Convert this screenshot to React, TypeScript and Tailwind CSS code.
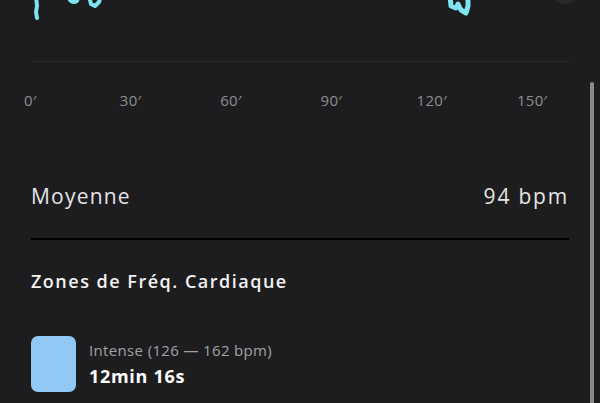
const ticks = ["0′", "30′", "60′", "90′", "120′", "150′"];

const HeartChart = () => (
  <div className="relative h-[62px] w-full">
    <svg className="absolute inset-0" width="600" height="62" viewBox="0 0 600 62">
      <g fill="none" stroke="#7ee4f2" strokeLinecap="round" strokeLinejoin="round">
        <path d="M36 -4 L37 6 L36 12 L37 18" strokeWidth="4" />
        <path d="M68 -4 Q70 2 74 2 Q78 2 78 -4" strokeWidth="4" />
        <path d="M89 -4 L91 4 L95 6 L99 2 L101 -4" strokeWidth="4" />
        <path d="M450 -4 L451 6 L456 8 L458 4 L461 10 L466 13 L468 6 L468 -4" strokeWidth="5" />
      </g>
    </svg>
    <div className="absolute right-[22px] top-[-22px] h-[26px] w-[26px] rounded-full bg-[#2a2a2c]" />
    <div className="absolute bottom-0 left-[32px] right-[30px] h-px bg-[#2b2b2d]" />
  </div>
);

export default function App() {
  return (
    <div
      className="relative h-[403px] w-[600px] overflow-hidden bg-[#1d1d1f] text-[#e4e4e4]"
      style={{ fontFamily: "'Open Sans', Lato, sans-serif" }}
    >
      <HeartChart />

      <div className="ml-[-20px] mt-[28px] flex text-[15px] leading-[20px] tracking-[0.3px] text-[#8d8d90]">
        {ticks.map((t) => (
          <div key={t} className="flex w-[100.4px] justify-center">
            {t}
          </div>
        ))}
      </div>

      <div className="mx-[31px] mt-[72px] flex items-center justify-between text-[21px] leading-[28px]">
        <span className="tracking-[1.2px]">Moyenne</span>
        <span className="tracking-[1.8px]">94 bpm</span>
      </div>

      <div className="mx-[31px] mt-[28px] h-[2px] bg-black" />

      <div className="ml-[31px] mt-[29px] text-[18px] font-semibold leading-[24px] tracking-[1.5px] text-[#f2f2f2]">
        Zones de Fréq. Cardiaque
      </div>

      <div className="ml-[31px] mt-[43px] flex items-center gap-[13px]">
        <div className="h-[56px] w-[45px] rounded-[7px] bg-[#92c8f6]" />
        <div className="flex flex-col">
          <span className="text-[15px] leading-[20px] tracking-[0.35px] text-[#a2a2a5]">
            Intense (126 — 162 bpm)
          </span>
          <span className="mt-[4px] text-[18px] font-bold leading-[24px] tracking-[0.7px] text-white">
            12min 16s
          </span>
        </div>
      </div>

      <div className="absolute right-[6px] top-[82px] bottom-[-4px] w-[4px] rounded-full bg-[#8a8a8c]" />
    </div>
  );
}
